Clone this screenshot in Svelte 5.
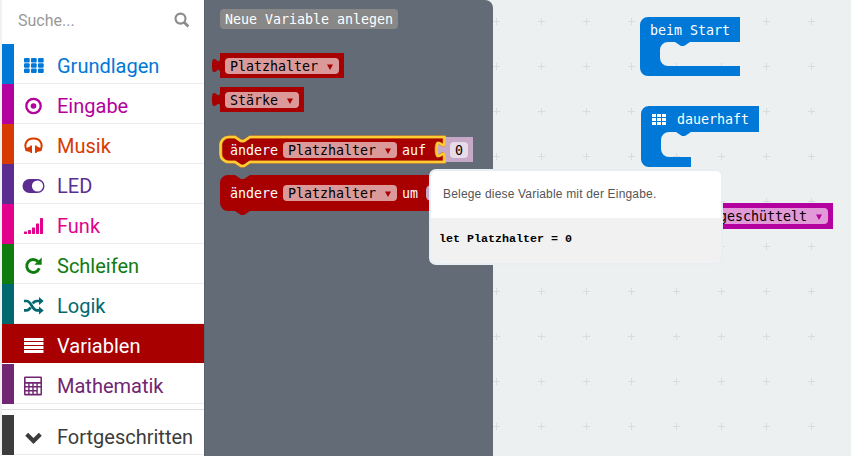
<script>
  const items = [
    { name: 'Grundlagen', color: '#0078d7', icon: 'grid' },
    { name: 'Eingabe', color: '#b4009e', icon: 'target' },
    { name: 'Musik', color: '#d83b01', icon: 'music' },
    { name: 'LED', color: '#5c2d91', icon: 'toggle' },
    { name: 'Funk', color: '#e3008c', icon: 'signal' },
    { name: 'Schleifen', color: '#107c10', icon: 'loop' },
    { name: 'Logik', color: '#006970', icon: 'shuffle' },
    { name: 'Variablen', color: '#a80000', icon: 'list', active: true },
    { name: 'Mathematik', color: '#712672', icon: 'calc' }
  ];
  const advanced = { name: 'Fortgeschritten', color: '#3c3c3c', icon: 'chevron' };
</script>

{#snippet glyph(icon)}
  <svg class="glyph" width="24" height="24" viewBox="0 0 24 24" fill="currentColor" stroke="none">
    {#if icon === 'grid'}
      {#each [4, 9.3, 14.6] as y}
        {#each [3, 10, 17] as x}
          <rect {x} {y} width="5.7" height="4.4" rx="1" />
        {/each}
      {/each}
    {:else if icon === 'target'}
      <circle cx="12.5" cy="12" r="7.2" fill="none" stroke="currentColor" stroke-width="2.3" />
      <circle cx="12.5" cy="12" r="2.8" />
    {:else if icon === 'music'}
      <path d="M5.600 16C2.600 10.500 5.400 4.500 12.500 4.500S22.400 10.500 19.400 16" fill="none" stroke="currentColor" stroke-width="2" />
      <path d="M9.300 11.500H11v7.500H9.300v-.9L4.500 16.900v-2.300l4.800-2.400zM15.700 11.500H14v7.500h1.700v-.9l4.800-1.200v-2.300l-4.800-2.400z" />
    {:else if icon === 'toggle'}
      <path fill-rule="evenodd" d="M8.500 5h8a7 7 0 0 1 0 14h-8a7 7 0 0 1 0-14zm8 1.400a5.600 5.600 0 1 0 0 11.200a5.600 5.600 0 0 0 0-11.200z" />
    {:else if icon === 'signal'}
      <rect x="3" y="17.500" width="3" height="2.500" rx=".4" />
      <rect x="7" y="16" width="3" height="4" rx=".4" />
      <rect x="11" y="13.500" width="3" height="6.500" rx=".4" />
      <rect x="15" y="9.500" width="3" height="10.500" rx=".4" />
      <rect x="19" y="4" width="3" height="16" rx=".4" />
    {:else if icon === 'loop'}
      <path d="M17 7.500A6.500 6.500 0 1 0 18.300 14.300" fill="none" stroke="currentColor" stroke-width="2.900" />
      <path d="M20.700 3.500v7.300h-7.400z" />
    {:else if icon === 'shuffle'}
      <path d="M3 7h2.500c5 0 5.500 9.400 10.500 9.400h3M3 16.400h2.500c2 0 3.100-1.400 4-3.100M11.700 9.500c1-1.600 2.200-2.500 4.300-2.500h3" fill="none" stroke="currentColor" stroke-width="2.700" />
      <path d="M18 3l4.700 4L18 11zM18 12.400l4.700 4-4.700 4z" />
    {:else if icon === 'list'}
      {#each [4, 8, 12, 16] as y}
        <rect x="3" {y} width="19.500" height="3" />
      {/each}
    {:else if icon === 'calc'}
      <path fill-rule="evenodd" d="M4.200 2.500h15.600a1.200 1.200 0 0 1 1.200 1.200v16.600a1.200 1.200 0 0 1-1.200 1.200H4.200A1.200 1.200 0 0 1 3 20.300V3.700a1.200 1.200 0 0 1 1.200-1.200zM4.600 4v4h14.800V4zM4.500 9.800v2.300h2.700V9.800zm4.100 0v2.300h2.700V9.800zm4.100 0v2.300h2.700V9.800zm4.100 0v2.300h2.700V9.800zM4.500 13.600v2.300h2.700v-2.300zm4.100 0v2.300h2.700v-2.300zm4.100 0v2.300h2.700v-2.300zM4.500 17.400v2.300h2.700v-2.300zm4.100 0v2.300h2.700v-2.300zm4.100 0v2.300h2.700v-2.300zm4.100-3.800v6.100h2.700v-6.100z" />
    {:else}
      <path d="M5.700 9.300l6.800 6.700 6.800-6.700" fill="none" stroke="currentColor" stroke-width="4.200" />
    {/if}
  </svg>
{/snippet}

{#snippet row(item)}
  <div class="row" class:active={item.active} style:--c={item.color}>
    {@render glyph(item.icon)}
    <span>{item.name}</span>
  </div>
{/snippet}

{#snippet dropdown(x, y, w, label, color, tint)}
  <rect {x} {y} width={w} height="16" rx="4" fill={tint} />
  <text class="dark" x={x + 5} y={y + 13}>{label}</text>
  <path d="M{x + w - 12} {y + 6.500}h6l-3 5.500z" fill={color} />
{/snippet}

<div class="app">
  <nav>
    <div class="search">
      <span>Suche...</span>
      <svg width="18" height="18" viewBox="0 0 18 18" fill="none" stroke="#8b8b8b">
        <circle cx="7.500" cy="7.600" r="5" stroke-width="2.100" />
        <path d="M11 11.200l4.400 4.300" stroke-width="2.700" />
      </svg>
    </div>
    {#each items as item}
      {@render row(item)}
    {/each}
    <div class="divider"></div>
    {@render row(advanced)}
  </nav>

  <main>
    <svg width="647" height="456" viewBox="204 0 647 456">
      <defs>
        <pattern id="crosses" x="474" y="-1" width="45" height="45" patternUnits="userSpaceOnUse">
          <path d="M19 22.500h7M22.500 19v7" stroke="#d8dcdd" />
        </pattern>
      </defs>
      <rect x="204" width="647" height="456" fill="#ecf0f1" />
      <rect x="204" width="647" height="456" fill="url(#crosses)" />

      <g fill="#0078d7">
        <path d="M640 25a8 8 0 0 1 8-8h92v25h-50l-6 4h-3l-6-4h-7a8 8 0 0 0-8 8v8a8 8 0 0 0 8 8h72v10h-92a8 8 0 0 1-8-8z" />
        <path d="M641 114a8 8 0 0 1 8-8h110v26h-68l-6 4h-3l-6-4h-7a8 8 0 0 0-8 8v9a8 8 0 0 0 8 8h22v10h-42a8 8 0 0 1-8-8z" />
      </g>
      <text x="650" y="35">beim Start</text>
      <g fill="#fff">
        {#each [114, 118, 122] as y}
          {#each [652, 657, 662] as x}
            <rect {x} {y} width="4" height="3" />
          {/each}
        {/each}
      </g>
      <text x="677" y="124">dauerhaft</text>

      <rect x="660" y="203" width="173" height="26" fill="#b4009e" />
      {@render dropdown(714, 208, 114, 'geschüttelt', '#b4009e', '#e199d8')}

      <path d="M204 0h281a8 8 0 0 1 8 8v448h-289z" fill="#636b77" />
      <path d="M204.500 0v456" stroke="#59616c" />

      <rect x="220" y="9" width="178" height="20" rx="4" fill="#888" />
      <text x="225" y="24">Neue Variable anlegen</text>

      <g fill="#a80000">
        <path d="M220 53h124v25H220v-5c0-10-8 8-8-7.500s8 2.500 8-7.500z" />
        <path d="M220 87h84v25H220v-5c0-10-8 8-8-7.500s8 2.500 8-7.500z" />
      </g>
      {@render dropdown(225, 58, 114, 'Platzhalter', '#a80000', '#dc9999')}
      {@render dropdown(225, 92, 74, 'Stärke', '#a80000', '#dc9999')}

      <path d="M444 137h29v25h-29v-5c0-10-8 8-8-7.500s8 2.500 8-7.500z" fill="#c6a8c7" />
      <rect x="450" y="142" width="18" height="16" rx="4" fill="#e8dce9" />
      <text class="dark" x="455" y="155">0</text>
      <path
        d="M221 145a8 8 0 0 1 8-8h6l6 4h3l6-4h194v5c0 10-8-8-8 7.500s8-2.500 8 7.500v5H250l-6 4h-3l-6-4h-6a8 8 0 0 1-8-8z"
        fill="#a80000" stroke="#c9651a" stroke-width="3" />
      <path
        d="M220.500 145a8 8 0 0 1 8-8h6.500l6 4h3l6-4h194.500v5c0 10-8-8-8 7.500s8-2.500 8 7.500v5H250l-6 4h-3l-6-4h-6.500a8 8 0 0 1-8-8z"
        fill="none" stroke="#fc3" stroke-width="2.600" />
      <text x="230" y="155">ändere</text>
      {@render dropdown(283, 142, 114, 'Platzhalter', '#a80000', '#dc9999')}
      <text x="402" y="155">auf</text>

      <path d="M220 183a8 8 0 0 1 8-8h7l6 4h3l6-4h220v36H250l-6 4h-3l-6-4h-7a8 8 0 0 1-8-8z" fill="#a80000" />
      <text x="230" y="198">ändere</text>
      {@render dropdown(283, 185, 114, 'Platzhalter', '#a80000', '#dc9999')}
      <text x="402" y="198">um</text>
      <rect x="426" y="185" width="18" height="16" rx="5" fill="#c6a8c7" />
    </svg>

    <aside class="tip">
      <p>Belege diese Variable mit der Eingabe.</p>
      <pre>let Platzhalter = 0</pre>
    </aside>
  </main>
</div>

<style>
  .app {
    display: flex;
    width: 851px;
    height: 456px;
    overflow: hidden;
    background: #fff;
  }
  nav {
    box-sizing: border-box;
    flex: none;
    width: 204px;
    border-left: 2px solid #f1f1f1;
    font: 20px/39px Roboto, sans-serif;
  }
  .search {
    display: flex;
    align-items: center;
    justify-content: space-between;
    height: 40px;
    padding: 0 13px 4px 16px;
    color: #999;
    font-size: 16px;
  }
  .row {
    box-sizing: border-box;
    display: flex;
    align-items: center;
    height: 40px;
    padding: 2px 0 0 7px;
    border-left: 12px solid var(--c);
    background: linear-gradient(#ebebeb, #ebebeb) bottom / 100% 1px no-repeat;
    color: var(--c);
  }
  .glyph {
    flex: none;
    margin-top: 2px;
  }
  .row span {
    margin: 2px 0 0 12px;
  }
  .row.active {
    height: 39px;
    margin-bottom: 1px;
    padding-top: 3px;
    background: var(--c);
    color: #fff;
  }
  .divider {
    height: 5px;
    margin-bottom: 5px;
    border-bottom: 1px solid #ddd;
  }
  main {
    position: relative;
    flex: 1;
  }
  main > svg {
    display: block;
  }
  text {
    fill: #fff;
    font: 13.3px 'DejaVu Sans Mono', monospace;
  }
  text.dark {
    fill: #000;
  }
  .tip {
    position: absolute;
    left: 225px;
    top: 169px;
    width: 290px;
    height: 92px;
    border: 2px solid #e9eef2;
    border-radius: 7px;
    background: #f1f1f1;
    overflow: hidden;
  }
  .tip p {
    height: 47px;
    margin: 0;
    padding-left: 12px;
    background: #fff;
    color: #555;
    font: 12px/46px 'Liberation Sans', sans-serif;
    letter-spacing: 0.18px;
  }
  .tip pre {
    margin: 0;
    padding-left: 8px;
    color: #000;
    font: bold 11.67px/43px 'Liberation Mono', monospace;
  }
</style>
